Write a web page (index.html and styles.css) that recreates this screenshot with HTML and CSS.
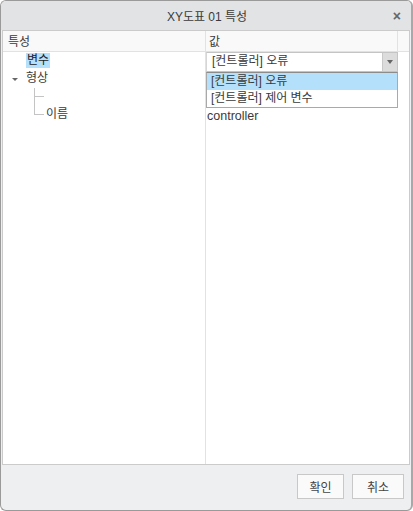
FILE: index.html
```html
<!DOCTYPE html>
<html lang="ko">
<head>
<meta charset="utf-8">
<title>XY도표 01 특성</title>
<link rel="stylesheet" href="styles.css">
</head>
<body>
<div class="dialog">
  <div class="titlebar">
    <span class="title">XY도표 01 특성</span>
    <span class="close">×</span>
  </div>
  <div class="panel">
    <div class="col col-left">
      <div class="head">특성</div>
      <div class="row"><span class="sel">변수</span></div>
      <div class="row"><span class="caret"></span><span class="lbl">형상</span></div>
      <div class="row"><span class="vline"></span></div>
      <div class="row"><span class="elbow"></span><span class="lbl">이름</span></div>
    </div>
    <div class="col col-right">
      <div class="head head-right">값</div>
      <div class="combo-wrap">
        <div class="combo">
          <span class="combo-text">[컨트롤러] 오류</span>
          <span class="combo-btn"><span class="tri"></span></span>
        </div>
        <div class="dropdown">
          <div class="item item-on">[컨트롤러] 오류</div>
          <div class="item">[컨트롤러] 제어 변수</div>
        </div>
      </div>
      <div class="row"></div>
      <div class="row"></div>
      <div class="row val">controller</div>
    </div>
    <div class="col col-fill">
      <div class="head"></div>
    </div>
  </div>
  <div class="footer">
    <button class="btn btn-ok">확인</button>
    <button class="btn btn-cancel">취소</button>
  </div>
</div>
</body>
</html>
```

FILE: styles.css
```css
* { box-sizing: border-box; }
html, body { margin: 0; padding: 0; background: #ffffff; }
body {
  font-family: "Liberation Sans", "Noto Sans CJK KR", sans-serif;
  font-size: 12px;
  color: #3a3a3a;
}
.dialog {
  width: 413px;
  height: 511px;
  border: 1px solid #9a9a9a;
  border-right: 2px solid #a8a8a8;
  border-radius: 6px;
  background: #eeeff1;
  display: flex;
  flex-direction: column;
  overflow: hidden;
}
.titlebar {
  height: 29px;
  flex: none;
  background: #e2e3e5;
  display: flex;
  align-items: center;
  justify-content: center;
  position: relative;
}
.title { font-size: 12px; color: #3a3a3a; padding-left: 2px; }
.close {
  position: absolute;
  right: 10px;
  top: 6px;
  font-size: 14px;
  font-weight: bold;
  color: #666;
  line-height: 18px;
}
.panel {
  height: 435px;
  flex: none;
  margin: 0 1px 0 1px;
  border: 1px solid #cbcbcb;
  background: #ffffff;
  display: flex;
}
.col { display: flex; flex-direction: column; }
.col-left { width: 202px; flex: none; }
.col-right { width: 193px; flex: none; border-left: 1px solid #e2e2e2; }
.col-fill { flex: 1; }
.head {
  height: 21px;
  flex: none;
  background: #f9f9f9;
  border-bottom: 1px solid #e2e2e2;
  padding: 4px 0 0 5px;
  line-height: 15px;
}
.head-right { padding-left: 3px; border-right: 1px solid #e2e2e2; }
.row {
  height: 18px;
  flex: none;
  display: flex;
  align-items: flex-start;
  line-height: 16px;
}
.sel {
  margin: 1px 0 0 23px;
  padding: 0 1px;
  background: #b4e0fb;
  color: #222;
  line-height: 15px;
}
.caret {
  width: 0; height: 0;
  margin: 8px 0 0 9px;
  border-left: 3px solid transparent;
  border-right: 3px solid transparent;
  border-top: 3px solid #666;
}
.lbl { margin-left: 8px; margin-top: 0; }
.vline {
  margin-left: 31px;
  width: 10px;
  height: 18px;
  border-left: 1px solid #c4c4c4;
  position: relative;
}
.vline::after {
  content: "";
  position: absolute;
  left: 0;
  top: 8px;
  width: 9px;
  border-top: 1px solid #c4c4c4;
}
.elbow {
  margin-left: 31px;
  width: 10px;
  height: 9px;
  border-left: 1px solid #c4c4c4;
  border-bottom: 1px solid #c4c4c4;
}
.row .elbow + .lbl { margin-left: 2px; margin-top: 0; }
.combo-wrap { position: relative; height: 20px; flex: none; }
.combo {
  height: 20px;
  border: 1px solid #c4c4c4;
  border-left-color: #d6d6d6;
  display: flex;
  align-items: stretch;
}
.combo-text { flex: 1; padding-left: 5px; line-height: 17px; }
.combo-btn {
  width: 15px;
  background: #dcdcdc;
  border-left: 1px solid #c8c8c8;
  display: flex;
  align-items: center;
  justify-content: center;
}
.tri {
  width: 0; height: 0;
  border-left: 3px solid transparent;
  border-right: 3px solid transparent;
  border-top: 4px solid #666;
}
.dropdown {
  position: absolute;
  top: 20px;
  left: 0;
  right: 0;
  border: 1px solid #a9a9a9;
  border-top-color: #8c8c8c;
  background: #fff;
  z-index: 2;
}
.item { height: 17px; line-height: 17px; padding-left: 4px; }
.item-on { background: #b4e0fb; }
.val { padding-left: 1px; font-size: 12.5px; line-height: 16px; }
.footer {
  flex: 1;
  display: flex;
  justify-content: flex-end;
  align-items: flex-start;
  gap: 8px;
  padding: 9px 7px 0 0;
}
.btn {
  height: 25px;
  border: 1px solid #c8c8c8;
  background: #fafafa;
  font-family: "Liberation Sans", "Noto Sans CJK KR", sans-serif;
  font-size: 12px;
  color: #444;
  padding: 0;
}
.btn-ok { width: 47px; }
.btn-cancel { width: 52px; }
```
